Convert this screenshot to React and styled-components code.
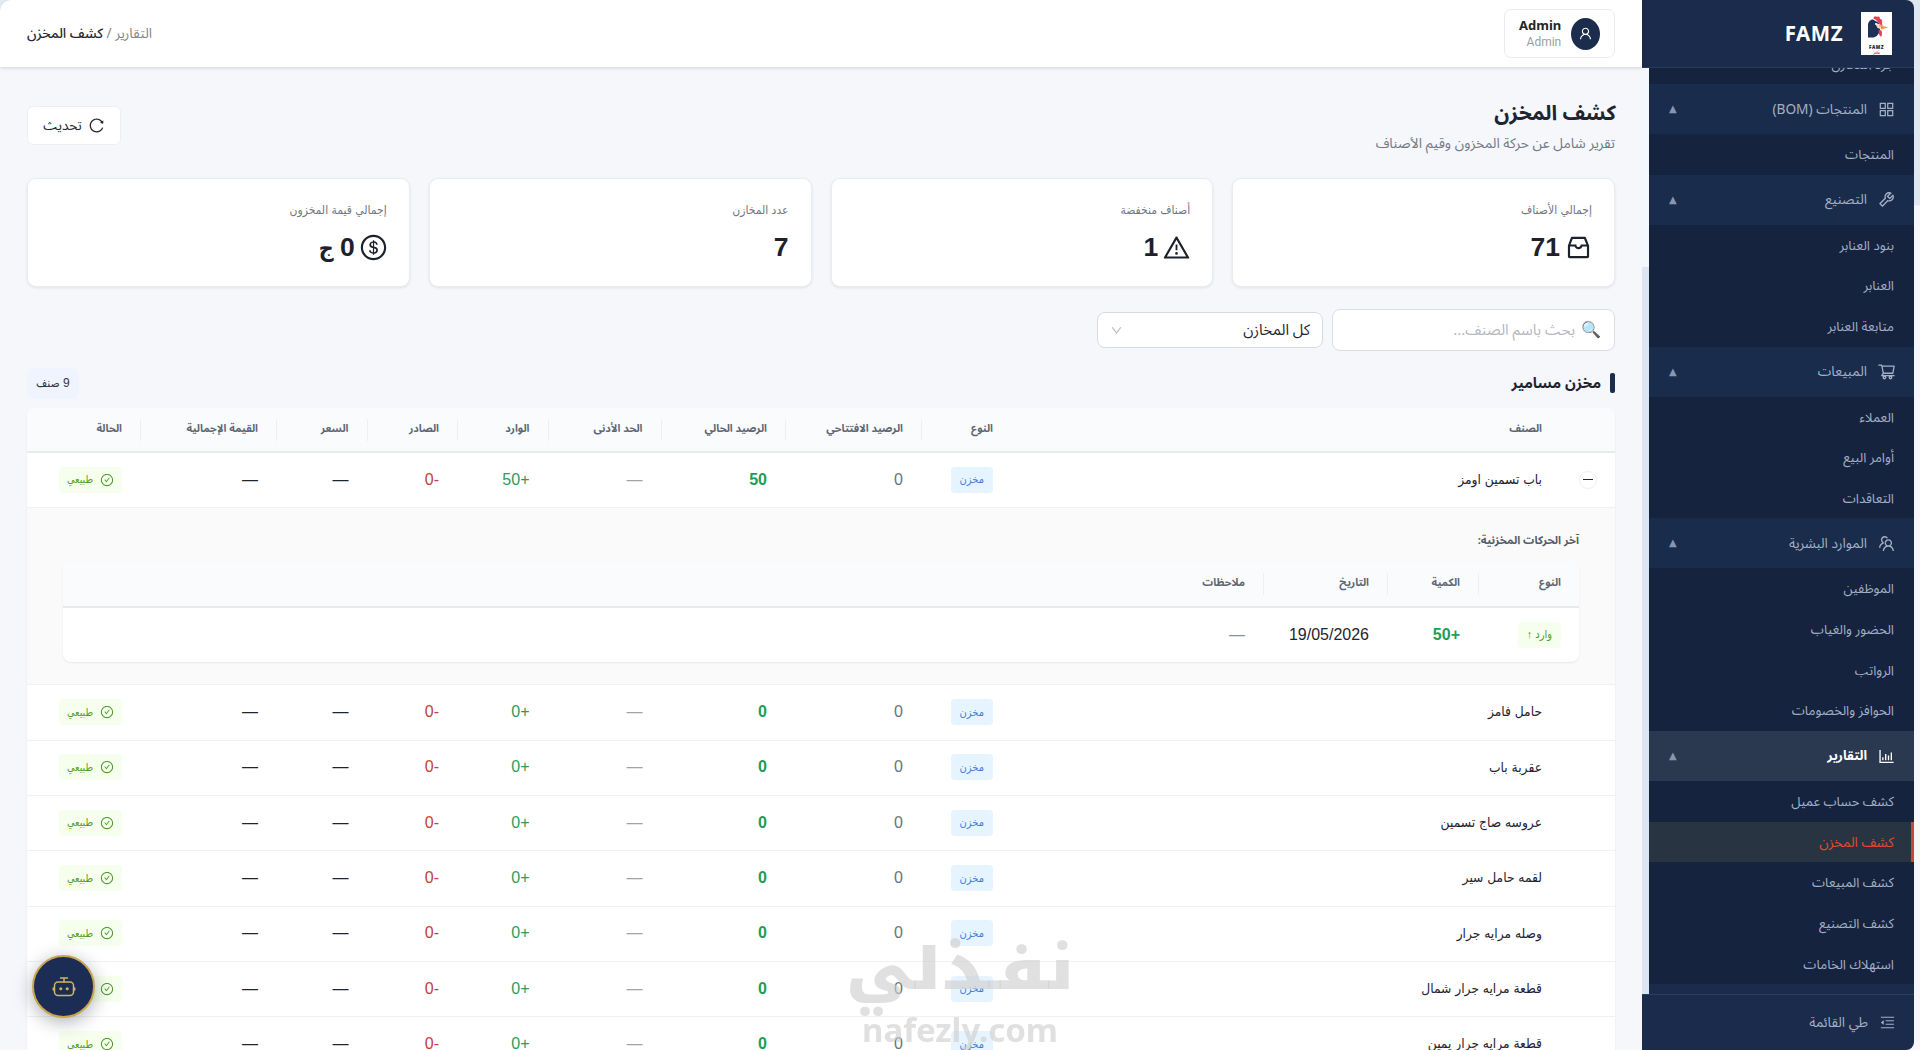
import React from 'react'
import styled, { createGlobalStyle, css } from 'styled-components'
import {
  AiOutlineAppstore,
  AiOutlineBarChart,
  AiOutlineCheckCircle,
  AiOutlineDollar,
  AiOutlineDown,
  AiOutlineInbox,
  AiOutlineMenuFold,
  AiOutlineReload,
  AiOutlineShoppingCart,
  AiOutlineTeam,
  AiOutlineTool,
  AiOutlineUser,
  AiOutlineWarning
} from 'react-icons/ai'

const uiFont = '"Noto Sans Arabic", "Noto Sans", "Open Sans", sans-serif'
const latinFont = '"Noto Sans", "Noto Sans Arabic", sans-serif'
const tableFont = '"Liberation Sans", "DejaVu Sans Condensed", sans-serif'

const GlobalStyle = createGlobalStyle`
  * { box-sizing: border-box; }
  body {
    margin: 0;
    background: linear-gradient(#dfe8f0 0, #dfe8f0 205px, #f7f7fb 206px);
    color: #1f2430;
    font-family: ${uiFont};
    overflow: hidden;
  }
`

const Shell = styled.div`
  direction: rtl;
  display: flex;
  width: 1914px;
  height: 1050px;
  margin-right: auto;
  border-radius: 12px 8px 8px 10px;
  overflow: hidden;
  background: #f5f7fb;
`

/* ---------- sidebar ---------- */

const Sidebar = styled.aside`
  display: flex;
  flex-direction: column;
  flex: none;
  width: 272px;
  background: #1a2b4b;
  color: #a3b0c6;
`

const Brand = styled.div`
  display: flex;
  align-items: center;
  flex: none;
  gap: 18px;
  height: 68px;
  padding: 0 22px 1px;
  border-bottom: 1px solid #263a5c;
  color: #fff;
  font: 700 20.5px/1 ${latinFont};
  letter-spacing: 0.5px;
`

const NavScroll = styled.nav`
  flex: 1;
  min-height: 0;
  overflow: hidden;
  border-style: solid;
  border-width: 0 0 0 7px;
  border-image: linear-gradient(#f4f7fc 0, #f4f7fc 199px, #dce6f3 200px) 1;
`

const NavTail = styled.div`
  height: 16px;
  overflow: hidden;
  background: #15233f;
`

const NavGroup = styled.div`
  display: flex;
  align-items: center;
  height: 50px;
  padding: 0 18px 0 20px;
  background: ${p => (p.$active ? '#2a394f' : '#1a2c4b')};
  color: ${p => (p.$active ? '#fff' : '#a3b0c6')};
  font-weight: ${p => (p.$active ? 700 : 400)};
  font-size: ${p => (p.$active ? 13.2 : 13.7)}px;

  svg {
    width: 19px;
    height: 19px;
    margin-left: 10px;
  }
`

const Caret = styled.span`
  margin-right: auto;
  color: #8796b3;
  font: 10px/1 "DejaVu Sans", sans-serif;
`

const NavItem = styled.div`
  height: 40.65px;
  padding-right: 20px;
  line-height: 42px;
  font-size: 13.2px;
  background: #15233f;
  ${p => p.$current && css`
    padding-right: 17px;
    border-right: 3px solid #c8453c;
    background: #283441;
    color: #e5472f;
    font-size: 13.8px;
  `}
`

const Collapse = styled.div`
  display: flex;
  align-items: center;
  flex: none;
  gap: 11px;
  height: 56px;
  padding: 0 18px;
  border-top: 1px solid #2b3e5f;
  font-size: 13.7px;
`

/* ---------- top bar ---------- */

const Main = styled.main`
  flex: 1;
  min-width: 0;
  display: flex;
  flex-direction: column;
`

const TopBar = styled.header`
  display: flex;
  align-items: center;
  justify-content: space-between;
  flex: none;
  height: 67px;
  padding: 0 27px;
  background: #fff;
  box-shadow: 0 1px 4px rgba(0, 21, 41, 0.16);
`

const UserBox = styled.div`
  display: flex;
  align-items: center;
  gap: 10px;
  width: 111px;
  height: 49px;
  padding: 0 14px;
  border: 1px solid #ececf0;
  border-radius: 7px;
`

const Avatar = styled.span`
  display: grid;
  place-items: center;
  width: 32px;
  height: 32px;
  border-radius: 50%;
  background: #1b2c4d;
  color: #fff;
`

const UserText = styled.div`
  font: 12px/17px Roboto, sans-serif;
  color: #9a9da3;
  text-align: right;

  b {
    display: block;
    color: #22252b;
    font: 700 13px/17px ${latinFont};
  }
`

const Crumbs = styled.div`
  color: #80858f;
  font-size: 13.7px;

  b {
    color: #24272e;
    font-weight: 500;
  }
`

/* ---------- page head ---------- */

const Page = styled.div`
  padding: 27px 27px 0;
`

const PageHead = styled.div`
  display: flex;
  align-items: center;
  justify-content: space-between;
  height: 63px;
`

const Title = styled.h1`
  margin: 0 -1px 0 0;
  padding-top: 2px;
  font-size: 20.7px;
  line-height: 35px;
  font-weight: 700;
`

const Subtitle = styled.p`
  margin: 0;
  color: #737a86;
  font-size: 13.9px;
  line-height: 26px;
`

const Refresh = styled.button`
  display: flex;
  align-items: center;
  justify-content: center;
  gap: 6px;
  width: 94px;
  height: 39px;
  padding: 0;
  border: 1px solid #edeff2;
  border-radius: 6px;
  background: #fff;
  color: #24272e;
  font: 13.5px ${uiFont};
`

const Stats = styled.div`
  display: grid;
  grid-template-columns: repeat(4, 1fr);
  gap: 19px;
  margin-top: 21px;
`

const StatCard = styled.div`
  height: 109px;
  padding: 19px 22px;
  border: 1px solid #e9ecf0;
  border-radius: 9px;
  background: #fff;
  box-shadow: 0 1px 3px rgba(0, 0, 0, 0.09);
`

const StatLabel = styled.div`
  color: #717782;
  font: 12px/24px ${tableFont};
`

const StatValue = styled.div`
  display: flex;
  align-items: center;
  gap: 4px;
  height: 50px;
  color: #1c212c;
  font: 700 26.5px/50px ${tableFont};

  svg {
    margin-right: -1px;
  }

  small {
    font-size: 23px;
  }
`

const Filters = styled.div`
  display: flex;
  align-items: center;
  gap: 9px;
  margin-top: 22px;
`

const Search = styled.div`
  display: flex;
  align-items: center;
  gap: 6px;
  width: 283px;
  height: 42px;
  padding: 0 13px;
  border: 1px solid #dcdee3;
  border-radius: 8px;
  background: #fff;
  color: #b5b8be;
  font-size: 15px;

  span {
    font-size: 16px;
  }
`

const Select = styled.div`
  display: flex;
  align-items: center;
  justify-content: space-between;
  width: 226px;
  height: 36px;
  padding: 0 12px;
  border: 1px solid #d9dbe0;
  border-radius: 8px;
  background: #fff;
  font-size: 15px;

  svg {
    color: #b3b6bc;
  }
`

/* ---------- warehouse table ---------- */

const SectionHead = styled.div`
  display: flex;
  align-items: center;
  height: 34px;
  margin-top: 15px;
`

const SectionTitle = styled.h2`
  display: flex;
  align-items: center;
  gap: 9px;
  margin: 0;
  font-size: 14.8px;
  font-weight: 700;

  &::before {
    content: '';
    width: 5px;
    height: 20px;
    border-radius: 2px;
    background: #1b2c4d;
  }
`

const Count = styled.span`
  margin-right: auto;
  padding: 0 9px;
  border-radius: 8px;
  background: #eff4fe;
  color: #30384a;
  font: 12px/31px ${tableFont};
`

const Panel = styled.div`
  margin-top: ${p => (p.$inner ? 0 : 8)}px;
  border-radius: 8px;
  background: #fff;
  box-shadow: 0 1px 2px rgba(0, 0, 0, 0.08);
  overflow: hidden;
`

const Table = styled.table`
  width: 100%;
  table-layout: fixed;
  border-spacing: 0;
  font: 16px/1 ${tableFont};
`

const Th = styled.th`
  height: ${p => (p.$inner ? 47 : 45)}px;
  padding: 0 18px 2px;
  border-bottom: 2px solid #e8eaed;
  background: linear-gradient(#edeff2, #edeff2) left 50% / ${p => (p.$plain ? 0 : 1)}px 22px no-repeat #fafbfd;
  color: #5f6673;
  font: 700 10.7px/20px ${uiFont};
  text-align: right;
  white-space: nowrap;
`

const Td = styled.td`
  height: ${p => (p.$inner ? 54 : 55.35)}px;
  padding: 0 18px 1px;
  border-bottom: ${p => (p.$inner ? 'none' : '1px solid #f0f1f3')};
  color: ${p => p.$color || '#1f2430'};
  font-weight: ${p => (p.$strong ? 700 : 400)};
  font-size: ${p => (p.$name ? 13.7 : 16)}px;
  white-space: nowrap;
`

const Expanded = styled.td`
  height: 177px;
  padding: 20px 36px 22px;
  border-bottom: 1px solid #f0f1f3;
  background: #fafafa;
  vertical-align: top;
`

const MovesTitle = styled.div`
  height: 33px;
  color: #565c68;
  font: 700 11.1px/26px ${uiFont};
`

const Tag = styled.span`
  display: inline-flex;
  align-items: center;
  gap: ${p => p.$gap || 0}px;
  height: 26px;
  padding: 0 ${p => (p.$gap ? 8 : 9)}px;
  border-radius: 4px;
  background: ${p => (p.$blue ? '#e6f4ff' : '#f6ffed')};
  color: ${p => (p.$blue ? '#3f7fdc' : '#4d9c2b')};
  font-size: ${p => (p.$gap ? 10.6 : 11)}px;
`

const Toggle = styled.span`
  display: grid;
  place-items: center;
  width: 18px;
  height: 18px;
  border: 1px solid #f0f0f2;
  border-radius: 50%;

  &::before {
    content: '';
    width: 10px;
    height: 1px;
    background: #24272e;
  }
`

/* ---------- floating ---------- */

const Assistant = styled.button`
  position: fixed;
  left: 32px;
  bottom: 32px;
  display: grid;
  place-items: center;
  width: 63px;
  height: 63px;
  border: 2px solid #c9a54b;
  border-radius: 50%;
  background: #1b2c55;
  color: #d2b260;
  box-shadow: 0 4px 18px rgba(20, 25, 40, 0.35);
`

const Watermark = styled.div`
  position: fixed;
  left: 840px;
  bottom: 0;
  width: 240px;
  height: 120px;
  color: rgba(205, 205, 207, 0.62);
  text-align: center;
  pointer-events: none;
`

const MarkArabic = styled.div`
  height: 80px;
  font: 900 66px/86px "Noto Kufi Arabic", "Noto Sans Arabic", sans-serif;
  white-space: nowrap;
  transform: scaleY(0.88);
  transform-origin: 0 12px;
`

const MarkLatin = styled.div`
  font: 700 33px/40px ${latinFont};
`

function Logo() {
  return (
    <svg width="31" height="43" viewBox="0 0 31 43">
      <rect width="31" height="43" fill="#fff" />
      <path d="M7 25.500V13C7 10 9 7.500 12 7.500l6 3.500 1 6c0 4-3 8-7 8.500z" fill="#1d3157" />
      <path d="M12.500 6.500c0-2 2-3 3.500-1.500 2-1 3 0 3 2 2 0 2.500 2 2 4l.5 3.500-3.500-3-3-3.500z" fill="#e3405a" />
      <path d="M14 11l4 1 1.500 5-3-1z" fill="#f4d9d4" />
      <path d="M19 13l8 2.500-7 2z" fill="#e9974f" />
      <path d="M17.500 18.500c2-1 3.500 0 3.500 2.500s-.5 4-1.500 3.500-2-3-2-6z" fill="#e3405a" />
      <circle cx="15" cy="12" r="0.9" fill="#fff" />
      <text x="15.5" y="36.5" textAnchor="middle" fontFamily="Noto Sans" fontSize="4.6" fontWeight="900" fill="#1d2433">FAMZ</text>
      <text x="15.5" y="41.5" textAnchor="middle" fontFamily="Noto Sans Arabic" fontSize="3.6" fill="#d3455a">فامز</text>
    </svg>
  )
}

function Bot() {
  return (
    <svg width="24" height="22" viewBox="0 0 24 22" fill="none" stroke="currentColor" strokeWidth="1.5" strokeLinecap="round">
      <path d="M8.500 2h7M12 2v4M1.300 12v2M22.700 12v2" />
      <rect x="2.500" y="6" width="19" height="13.500" rx="3.500" />
      <circle cx="8.800" cy="12.800" r="1.500" fill="currentColor" stroke="none" />
      <circle cx="15.200" cy="12.800" r="1.500" fill="currentColor" stroke="none" />
    </svg>
  )
}

const menu = [
  { icon: <AiOutlineAppstore />, label: 'المنتجات (BOM)', items: ['المنتجات'] },
  { icon: <AiOutlineTool />, label: 'التصنيع', items: ['بنود العنابر', 'العنابر', 'متابعة العنابر'] },
  { icon: <AiOutlineShoppingCart />, label: 'المبيعات', items: ['العملاء', 'أوامر البيع', 'التعاقدات'] },
  { icon: <AiOutlineTeam />, label: 'الموارد البشرية', items: ['الموظفين', 'الحضور والغياب', 'الرواتب', 'الحوافز والخصومات'] },
  {
    icon: <AiOutlineBarChart />,
    label: 'التقارير',
    active: true,
    items: ['كشف حساب عميل', 'كشف المخزن', 'كشف المبيعات', 'كشف التصنيع', 'استهلاك الخامات']
  }
]

const currentItem = 'كشف المخزن'

const stats = [
  { label: 'إجمالي الأصناف', value: '71', icon: <AiOutlineInbox size={29} /> },
  { label: 'أصناف منخفضة', value: '1', icon: <AiOutlineWarning size={29} /> },
  { label: 'عدد المخازن', value: '7' },
  { label: 'إجمالي قيمة المخزون', value: '0', unit: 'ج', icon: <AiOutlineDollar size={29} /> }
]

const columns = [
  { label: '', width: 55, plain: true },
  { label: 'الصنف', width: 549, plain: true },
  { label: 'النوع', width: 90 },
  { label: 'الرصيد الافتتاحي', width: 136 },
  { label: 'الرصيد الحالي', width: 124.5 },
  { label: 'الحد الأدنى', width: 113 },
  { label: 'الوارد', width: 90.5 },
  { label: 'الصادر', width: 90.5 },
  { label: 'السعر', width: 90.5 },
  { label: 'القيمة الإجمالية', width: 136 },
  { label: 'الحالة', width: 113, plain: true }
]

const moveColumns = [
  { label: 'النوع', width: 101 },
  { label: 'الكمية', width: 91 },
  { label: 'التاريخ', width: 124 },
  { label: 'ملاحظات', width: 1200, plain: true }
]

const items = [
  { name: 'باب تسمين اومز', qty: 50, open: true },
  { name: 'حامل فامز', qty: 0 },
  { name: 'عقربة باب', qty: 0 },
  { name: 'عروسه صاج تسمين', qty: 0 },
  { name: 'لقمه حامل سير', qty: 0 },
  { name: 'وصله مرايه جرار', qty: 0 },
  { name: 'قطعة مرايه جرار شمال', qty: 0 },
  { name: 'قطعة مرايه جرار يمين', qty: 0 }
]

function TableHead({ cols, inner }) {
  return (
    <>
      <colgroup>
        {cols.map((c, i) => <col key={i} width={c.width} />)}
      </colgroup>
      <thead>
        <tr>
          {cols.map((c, i) => <Th key={i} $plain={c.plain} $inner={inner}>{c.label}</Th>)}
        </tr>
      </thead>
    </>
  )
}

function Moves() {
  return (
    <tr>
      <Expanded colSpan={columns.length}>
        <MovesTitle>آخر الحركات المخزنية:</MovesTitle>
        <Panel $inner>
          <Table>
            <TableHead cols={moveColumns} inner />
            <tbody>
              <tr>
                <Td $inner><Tag>وارد ↑</Tag></Td>
                <Td $inner $strong $color="#1f9d55">+50</Td>
                <Td $inner>19/05/2026</Td>
                <Td $inner $color="#8b8f96">—</Td>
              </tr>
            </tbody>
          </Table>
        </Panel>
      </Expanded>
    </tr>
  )
}

function ItemRow({ item }) {
  return (
    <>
      <tr>
        <Td>{item.open && <Toggle />}</Td>
        <Td $name>{item.name}</Td>
        <Td><Tag $blue>مخزن</Tag></Td>
        <Td $color="#6b7280">0</Td>
        <Td $strong $color="#1f9d55">{item.qty}</Td>
        <Td $color="#a0a4aa">—</Td>
        <Td $color="#2a9d63">+{item.qty}</Td>
        <Td $color="#c93a3a">-0</Td>
        <Td>—</Td>
        <Td>—</Td>
        <Td><Tag $gap={7}><AiOutlineCheckCircle size={14} />طبيعي</Tag></Td>
      </tr>
      {item.open && <Moves />}
    </>
  )
}

export default function App() {
  return (
    <>
      <GlobalStyle />
      <Shell>
        <Sidebar>
          <Brand>
            <Logo />
            <span>FAMZ</span>
          </Brand>
          <NavScroll>
            <NavTail>
              <NavItem style={{ marginTop: -24 }}>جرد المخازن</NavItem>
            </NavTail>
            {menu.map(group => (
              <React.Fragment key={group.label}>
                <NavGroup $active={group.active}>
                  {group.icon}
                  <span>{group.label}</span>
                  <Caret>▲</Caret>
                </NavGroup>
                {group.items.map(item => (
                  <NavItem key={item} $current={item === currentItem}>{item}</NavItem>
                ))}
              </React.Fragment>
            ))}
          </NavScroll>
          <Collapse>
            <AiOutlineMenuFold size={17} />
            <span>طي القائمة</span>
          </Collapse>
        </Sidebar>

        <Main>
          <TopBar>
            <UserBox>
              <Avatar><AiOutlineUser size={15} /></Avatar>
              <UserText>
                <b>Admin</b>
                Admin
              </UserText>
            </UserBox>
            <Crumbs>التقارير / <b>كشف المخزن</b></Crumbs>
          </TopBar>

          <Page>
            <PageHead>
              <div>
                <Title>كشف المخزن</Title>
                <Subtitle>تقرير شامل عن حركة المخزون وقيم الأصناف</Subtitle>
              </div>
              <Refresh><AiOutlineReload size={17} />تحديث</Refresh>
            </PageHead>

            <Stats>
              {stats.map(s => (
                <StatCard key={s.label}>
                  <StatLabel>{s.label}</StatLabel>
                  <StatValue>
                    {s.icon}
                    <span>{s.value}{s.unit && <small> {s.unit}</small>}</span>
                  </StatValue>
                </StatCard>
              ))}
            </Stats>

            <Filters>
              <Search><span>🔍</span>بحث باسم الصنف...</Search>
              <Select>كل المخازن<AiOutlineDown size={13} /></Select>
            </Filters>

            <SectionHead>
              <SectionTitle>مخزن مسامير</SectionTitle>
              <Count>9 صنف</Count>
            </SectionHead>

            <Panel>
              <Table>
                <TableHead cols={columns} />
                <tbody>
                  {items.map(item => <ItemRow key={item.name} item={item} />)}
                </tbody>
              </Table>
            </Panel>
          </Page>
        </Main>
      </Shell>
      <Watermark>
        <MarkArabic>نفـذلي</MarkArabic>
        <MarkLatin>nafezly.com</MarkLatin>
      </Watermark>
      <Assistant><Bot /></Assistant>
    </>
  )
}
